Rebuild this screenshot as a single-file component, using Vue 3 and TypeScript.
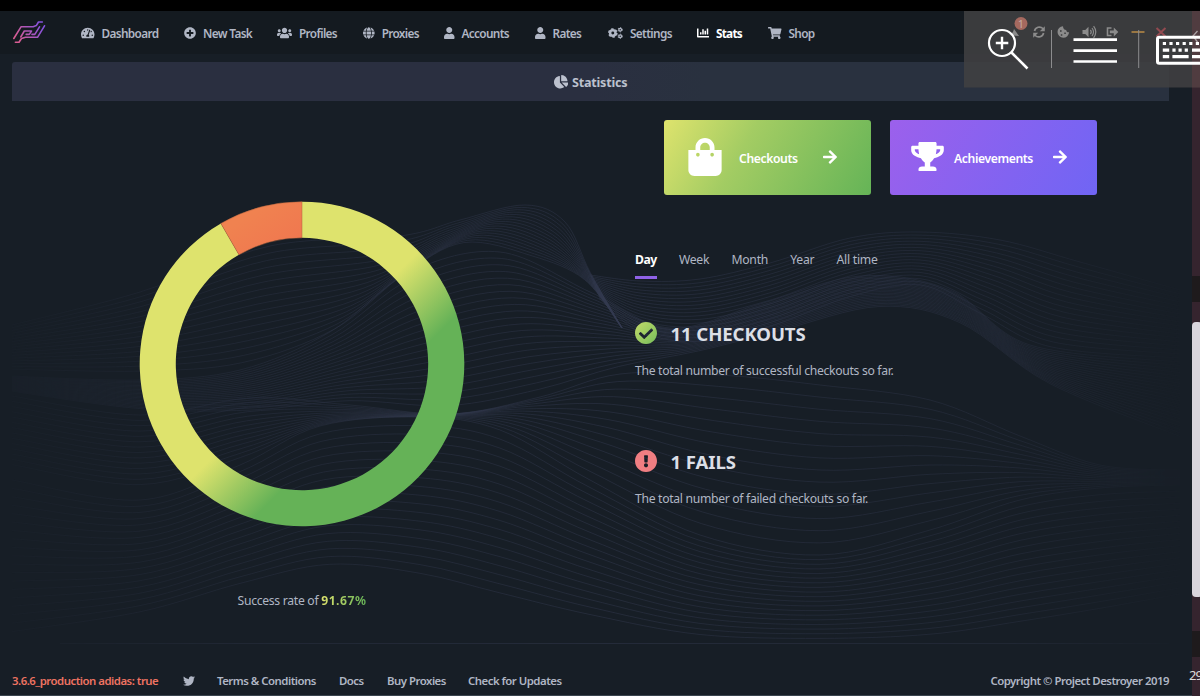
<script setup lang="ts">
interface Glyph { w: number; d: string }
type Pt = [number, number]

const glyphs: Record<string, Glyph> = {
  dashboard: { w: 576, d: 'M288 32C128.94 32 0 160.94 0 320c0 52.8 14.25 102.26 39.06 144.8 5.61 9.62 16.3 15.2 27.44 15.2h443c11.14 0 21.83-5.58 27.44-15.2C561.75 422.26 576 372.8 576 320c0-159.06-128.94-288-288-288zm0 64c14.71 0 26.58 10.13 30.32 23.65-1.11 2.26-2.64 4.23-3.45 6.67l-9.22 27.67c-5.13 3.49-10.97 6.01-17.64 6.01-17.67 0-32-14.33-32-32S270.33 96 288 96zM96 384c-17.67 0-32-14.33-32-32s14.33-32 32-32 32 14.33 32 32-14.33 32-32 32zm48-160c-17.67 0-32-14.33-32-32s14.33-32 32-32 32 14.33 32 32-14.33 32-32 32zm246.77-72.41l-61.33 184C343.13 347.33 352 364.54 352 384c0 11.72-3.38 22.55-8.88 32H232.88c-5.5-9.45-8.88-20.28-8.88-32 0-33.94 26.5-61.43 59.9-63.59l61.34-184.01c4.17-12.56 17.73-19.45 30.36-15.17 12.57 4.19 19.35 17.79 15.17 30.36zm14.66 57.2l15.52-46.55c3.47-1.29 7.13-2.23 11.05-2.23 17.67 0 32 14.33 32 32s-14.33 32-32 32c-11.38-.01-20.89-6.28-26.57-15.22zM480 384c-17.67 0-32-14.33-32-32s14.33-32 32-32 32 14.33 32 32-14.33 32-32 32z' },
  plus: { w: 512, d: 'M256 8C119 8 8 119 8 256s111 248 248 248 248-111 248-248S393 8 256 8zm144 276c0 6.6-5.4 12-12 12h-92v92c0 6.6-5.4 12-12 12h-56c-6.6 0-12-5.4-12-12v-92h-92c-6.6 0-12-5.4-12-12v-56c0-6.6 5.4-12 12-12h92v-92c0-6.6 5.4-12 12-12h56c6.6 0 12 5.4 12 12v92h92c6.6 0 12 5.4 12 12v56z' },
  users: { w: 640, d: 'M96 224c35.3 0 64-28.7 64-64s-28.7-64-64-64-64 28.7-64 64 28.7 64 64 64zm448 0c35.3 0 64-28.7 64-64s-28.7-64-64-64-64 28.7-64 64 28.7 64 64 64zm32 32h-64c-17.6 0-33.5 7.1-45.1 18.6 40.3 22.1 68.9 62 75.1 109.4h66c17.7 0 32-14.3 32-32v-32c0-35.3-28.7-64-64-64zm-256 0c61.9 0 112-50.1 112-112S381.9 32 320 32 208 82.1 208 144s50.1 112 112 112zm76.8 32h-8.3c-20.8 10-43.9 16-68.5 16s-47.6-6-68.5-16h-8.3C179.6 288 128 339.6 128 403.2V432c0 26.5 21.5 48 48 48h288c26.5 0 48-21.5 48-48v-28.8c0-63.6-51.6-115.2-115.2-115.2zm-223.7-13.4C161.5 263.1 145.6 256 128 256H64c-35.3 0-64 28.7-64 64v32c0 17.7 14.3 32 32 32h65.9c6.3-47.4 34.9-87.3 75.2-109.4z' },
  globe: { w: 496, d: 'M336.5 160C322 70.7 287.8 8 248 8s-74 62.7-88.5 152h177zM152 256c0 22.2 1.2 43.5 3.3 64h185.3c2.1-20.5 3.3-41.8 3.3-64s-1.2-43.5-3.3-64H155.3c-2.1 20.5-3.3 41.8-3.3 64zm324.7-96c-28.6-67.9-86.5-120.4-158-141.6 24.4 33.8 41.2 84.7 50 141.6h108zM177.2 18.4C105.8 39.6 47.8 92.1 19.3 160h108c8.7-56.9 25.5-107.8 49.9-141.6zM487.4 192H372.7c2.1 21 3.3 42.5 3.3 64s-1.2 43-3.3 64h114.6c5.5-20.5 8.6-41.8 8.6-64s-3.1-43.5-8.5-64zM120 256c0-21.5 1.2-43 3.3-64H8.6C3.2 212.5 0 233.8 0 256s3.2 43.5 8.6 64h114.6c-2-21-3.2-42.5-3.2-64zm39.5 96c14.5 89.3 48.7 152 88.5 152s74-62.7 88.5-152h-177zm159.3 141.6c71.4-21.2 129.4-73.7 158-141.6h-108c-8.8 56.9-25.6 107.8-50 141.6zM19.3 352c28.6 67.9 86.5 120.4 158 141.6-24.4-33.8-41.2-84.7-50-141.6h-108z' },
  user: { w: 448, d: 'M224 256c70.7 0 128-57.3 128-128S294.7 0 224 0 96 57.3 96 128s57.3 128 128 128zm89.6 32h-16.7c-22.2 10.2-46.9 16-72.9 16s-50.6-5.8-72.9-16h-16.7C60.2 288 0 348.2 0 422.4V464c0 26.5 21.5 48 48 48h352c26.5 0 48-21.5 48-48v-41.6c0-74.2-60.2-134.4-134.4-134.4z' },
  bars: { w: 512, d: 'M332.8 320h38.4c6.4 0 12.8-6.4 12.8-12.8V172.8c0-6.4-6.4-12.8-12.8-12.8h-38.4c-6.4 0-12.8 6.4-12.8 12.8v134.4c0 6.4 6.4 12.8 12.8 12.8zm96 0h38.4c6.4 0 12.8-6.4 12.8-12.8V76.8c0-6.4-6.4-12.8-12.8-12.8h-38.4c-6.4 0-12.8 6.4-12.8 12.8v230.4c0 6.4 6.4 12.8 12.8 12.8zm-288 0h38.4c6.4 0 12.8-6.4 12.8-12.8v-70.4c0-6.4-6.4-12.8-12.8-12.8h-38.4c-6.4 0-12.8 6.4-12.8 12.8v70.4c0 6.4 6.4 12.8 12.8 12.8zm96 0h38.4c6.4 0 12.8-6.4 12.8-12.8V108.8c0-6.4-6.4-12.8-12.8-12.8h-38.4c-6.4 0-12.8 6.4-12.8 12.8v198.4c0 6.4 6.4 12.8 12.8 12.8zM496 384H64V80c0-8.84-7.16-16-16-16H16C7.16 64 0 71.16 0 80v336c0 17.67 14.33 32 32 32h464c8.84 0 16-7.16 16-16v-32c0-8.84-7.16-16-16-16z' },
  cart: { w: 576, d: 'M528.12 301.319l47.273-208C578.806 78.301 567.391 64 551.99 64H159.208l-9.166-44.81C147.758 8.021 137.93 0 126.529 0H24C10.745 0 0 10.745 0 24v16c0 13.255 10.745 24 24 24h69.883l70.248 343.435C147.325 417.1 136 435.222 136 456c0 30.928 25.072 56 56 56s56-25.072 56-56c0-15.674-6.447-29.835-16.824-40h209.647C430.447 426.165 424 440.326 424 456c0 30.928 25.072 56 56 56s56-25.072 56-56c0-22.172-12.888-41.332-31.579-50.405l5.517-24.276c3.413-15.018-8.002-29.319-23.403-29.319H218.117l-6.545-32h293.145c11.206 0 20.92-7.754 23.403-18.681z' },
  pie: { w: 544, d: 'M527.79 288H290.5l158.03 158.03c6.04 6.04 15.98 6.53 22.19.68 38.7-36.46 65.32-85.61 73.13-140.86 1.34-9.46-6.51-17.85-16.06-17.85zm-15.83-64.8C503.72 103.74 408.26 8.28 288.8.04 279.68-.59 272 7.1 272 16.24V240h223.77c9.14 0 16.82-7.68 16.19-16.8zM224 288V50.71c0-9.55-8.39-17.4-17.84-16.06C86.99 51.49-4.1 155.6.14 280.37 4.5 408.51 114.83 513.59 243.03 511.98c50.4-.63 96.97-16.87 135.26-44.03 7.9-5.6 8.42-17.23 1.57-24.08L224 288z' },
  trophy: { w: 576, d: 'M552 64H448V24c0-13.3-10.7-24-24-24H152c-13.3 0-24 10.7-24 24v40H24C10.7 64 0 74.7 0 88v56c0 35.7 22.5 72.4 61.9 100.7 31.5 22.7 69.8 37.1 110 41.7C203.3 338.5 240 360 240 360v72h-48c-35.3 0-64 20.7-64 56v12c0 6.6 5.4 12 12 12h296c6.6 0 12-5.4 12-12v-12c0-35.3-28.7-56-64-56h-48v-72s36.7-21.5 68.1-73.6c40.3-4.6 78.6-19 110-41.7 39.3-28.3 61.9-65 61.9-100.7V88c0-13.3-10.7-24-24-24zM99.3 192.8C74.9 175.2 64 155.6 64 144v-16h64.2c1 32.6 5.8 61.2 12.8 86.2-15.1-5.2-29.2-12.4-41.7-21.4zM512 144c0 16.1-17.7 36.1-35.3 48.8-12.5 9-26.7 16.2-41.8 21.4 7-25 11.8-53.6 12.8-86.2H512v16z' },
  bag: { w: 448, d: 'M352 160v-32C352 57.42 294.579 0 224 0 153.42 0 96 57.42 96 128v32H0v272c0 44.183 35.817 80 80 80h288c44.183 0 80-35.817 80-80V160h-96zm-192-32c0-35.29 28.71-64 64-64s64 28.71 64 64v32H160v-32zm160 120c-13.255 0-24-10.745-24-24s10.745-24 24-24 24 10.745 24 24-10.745 24-24 24zm-192 0c-13.255 0-24-10.745-24-24s10.745-24 24-24 24 10.745 24 24-10.745 24-24 24z' },
  arrow: { w: 448, d: 'M190.5 66.9l22.2-22.2c9.4-9.4 24.6-9.4 33.9 0L441 239c9.4 9.4 9.4 24.6 0 33.9L246.6 467.3c-9.4 9.4-24.6 9.4-33.9 0l-22.2-22.2c-9.5-9.5-9.3-25 .4-34.3L311.4 296H24c-13.3 0-24-10.7-24-24v-32c0-13.3 10.7-24 24-24h287.4L190.9 101.2c-9.8-9.3-10-24.8-.4-34.3z' },
  check: { w: 512, d: 'M504 256c0 136.967-111.033 248-248 248S8 392.967 8 256 119.033 8 256 8s248 111.033 248 248zM227.314 387.314l184-184c6.248-6.248 6.248-16.379 0-22.627l-22.627-22.627c-6.248-6.249-16.379-6.249-22.628 0L216 308.118l-70.059-70.059c-6.248-6.248-16.379-6.248-22.628 0l-22.627 22.627c-6.248 6.248-6.248 16.379 0 22.627l104 104c6.249 6.249 16.379 6.249 22.628.001z' },
  alert: { w: 512, d: 'M504 256c0 136.997-111.043 248-248 248S8 392.997 8 256C8 119.083 119.043 8 256 8s248 111.083 248 248zm-248 50c-25.405 0-46 20.595-46 46s20.595 46 46 46 46-20.595 46-46-20.595-46-46-46zm-43.673-165.346l7.418 136c.347 6.364 5.609 11.346 11.982 11.346h48.546c6.373 0 11.635-4.982 11.982-11.346l7.418-136c.375-6.874-5.098-12.654-11.982-12.654h-63.383c-6.884 0-12.356 5.78-11.981 12.654z' },
  twitter: { w: 512, d: 'M459.37 151.716c.325 4.548.325 9.097.325 13.645 0 138.72-105.583 298.558-298.558 298.558-59.452 0-114.68-17.219-161.137-47.106 8.447.974 16.568 1.299 25.34 1.299 49.055 0 94.213-16.568 130.274-44.832-46.132-.975-84.792-31.188-98.112-72.772 6.498.974 12.995 1.624 19.818 1.624 9.421 0 18.843-1.3 27.614-3.573-48.081-9.747-84.143-51.98-84.143-102.985v-1.299c13.969 7.797 30.214 12.67 47.431 13.319-28.264-18.843-46.781-51.005-46.781-87.391 0-19.492 5.197-37.36 14.294-52.954 51.655 63.675 129.3 105.258 216.365 109.807-1.624-7.797-2.599-15.918-2.599-24.04 0-57.828 46.782-104.934 104.934-104.934 30.213 0 57.502 12.67 76.67 33.137 23.715-4.548 46.456-13.32 66.599-25.34-7.798 24.366-24.366 44.833-46.132 57.827 21.117-2.273 41.584-8.122 60.426-16.243-14.292 20.791-32.161 39.308-52.628 54.253z' },
}

const nav = [
  { label: 'Dashboard', icon: 'dashboard' },
  { label: 'New Task', icon: 'plus' },
  { label: 'Profiles', icon: 'users' },
  { label: 'Proxies', icon: 'globe' },
  { label: 'Accounts', icon: 'user' },
  { label: 'Rates', icon: 'user' },
  { label: 'Settings', icon: 'cogs' },
  { label: 'Stats', icon: 'bars' },
  { label: 'Shop', icon: 'cart' },
]

const ranges = ['Day', 'Week', 'Month', 'Year', 'All time']

/* Smooth path through a list of points (Catmull-Rom to Bezier). */
function smooth(p: Pt[]): string {
  let out = `M${p[0][0]} ${p[0][1].toFixed(1)}`
  for (let i = 0; i < p.length - 1; i++) {
    const a = p[Math.max(i - 1, 0)]
    const b = p[i]
    const c = p[i + 1]
    const d = p[Math.min(i + 2, p.length - 1)]
    out += `C${(b[0] + (c[0] - a[0]) / 6).toFixed(1)} ${(b[1] + (c[1] - a[1]) / 6).toFixed(1)} `
    out += `${(c[0] - (d[0] - b[0]) / 6).toFixed(1)} ${(c[1] - (d[1] - b[1]) / 6).toFixed(1)} ${c[0].toFixed(1)} ${c[1].toFixed(1)}`
  }
  return out
}

/* Lines blended between neighbouring key curves. */
function mesh(keys: Pt[][], steps: number): string[] {
  const lines: string[] = []
  for (let k = 0; k < keys.length - 1; k++) {
    for (let s = 0; s < steps; s++) {
      const t = s / steps
      lines.push(smooth(keys[k].map((p, i): Pt => [
        p[0] + (keys[k + 1][i][0] - p[0]) * t,
        p[1] + (keys[k + 1][i][1] - p[1]) * t,
      ])))
    }
  }
  return lines
}

const waves: string[] = [
  ...mesh([
    [[12, 325], [140, 292], [270, 246], [400, 236], [460, 220], [525, 205], [565, 222], [590, 272], [622, 328]],
    [[12, 372], [140, 376], [240, 370], [330, 335], [400, 278], [460, 245], [530, 258], [584, 280], [622, 328]],
  ], 17),
  ...mesh([
    [[590, 275], [640, 281], [700, 279], [770, 263], [850, 238], [920, 232], [1000, 240], [1080, 262], [1180, 290]],
    [[600, 300], [640, 335], [700, 345], [770, 330], [850, 300], [920, 288], [980, 318], [1050, 352], [1180, 362]],
  ], 18),
  ...mesh([
    [[12, 376], [140, 380], [240, 370], [330, 332], [410, 272], [500, 252], [590, 292], [670, 328], [760, 304], [860, 276], [950, 290], [1030, 345], [1180, 362]],
    [[12, 392], [140, 410], [250, 412], [350, 404], [450, 412], [540, 396], [620, 370], [700, 352], [780, 332], [880, 308], [960, 324], [1050, 385], [1180, 440]],
  ], 22),
  ...mesh([
    [[12, 396], [140, 415], [250, 398], [350, 405], [450, 414], [540, 397], [620, 374], [720, 375], [820, 385], [930, 400], [1020, 436], [1100, 465], [1180, 470]],
    [[12, 470], [140, 490], [240, 462], [320, 426], [420, 417], [500, 430], [590, 480], [700, 535], [820, 555], [930, 530], [1020, 500], [1100, 488], [1180, 485]],
  ], 14),
  ...mesh([
    [[12, 480], [140, 500], [240, 465], [320, 426], [420, 417], [500, 430], [590, 480], [700, 535], [820, 555], [930, 530], [1020, 500], [1100, 488], [1180, 485]],
    [[12, 640], [140, 618], [240, 590], [330, 572], [420, 582], [500, 602], [590, 622], [700, 640], [820, 643], [930, 640], [1020, 628], [1100, 615], [1180, 600]],
  ], 19),
  'M60 643.5H1169',
]
</script>

<template>
  <div class="screen">
    <div class="window">
      <header class="topbar">
        <svg class="logo" viewBox="0 0 36 26" fill="none">
          <defs>
            <linearGradient id="lg" gradientUnits="userSpaceOnUse" x1="2" y1="24" x2="33" y2="2">
              <stop offset="0.15" stop-color="#d75c92" />
              <stop offset="0.85" stop-color="#8652dd" />
            </linearGradient>
          </defs>
          <g stroke="url(#lg)" stroke-width="1.6" stroke-linejoin="round" stroke-linecap="round">
            <path d="M1.800 18.500 9 6.800H21.200L24.300 5.600 26.500 2h3.800" />
            <path d="M32.500 5.800 25.500 17.300H13.500L9.500 18.500 7 22.300H3.400" />
            <path d="M8.800 17 12.300 11H19.500l-2.200 3.400h-3.100M20 14.400h2.800L27.500 6.800" />
          </g>
        </svg>
        <nav class="nav">
          <a v-for="n in nav" :key="n.label" class="nav-item" :class="{ active: n.label === 'Stats' }">
            <svg v-if="n.icon === 'cogs'" class="nav-icon" viewBox="0 0 640 512" fill="none" stroke="currentColor">
              <circle cx="205" cy="256" r="115" stroke-width="105" />
              <circle cx="205" cy="256" r="172" stroke-width="68" stroke-dasharray="100 80.100" />
              <circle cx="520" cy="115" r="58" stroke-width="56" />
              <circle cx="520" cy="115" r="92" stroke-width="38" stroke-dasharray="50 46.300" />
              <circle cx="520" cy="397" r="58" stroke-width="56" />
              <circle cx="520" cy="397" r="92" stroke-width="38" stroke-dasharray="50 46.300" />
            </svg>
            <svg v-else class="nav-icon" :viewBox="`0 0 ${glyphs[n.icon].w} 512`" fill="currentColor"><path :d="glyphs[n.icon].d" /></svg>
            <span class="nav-label">{{ n.label }}</span>
          </a>
        </nav>
      </header>

      <h1 class="title">
        <svg class="title-icon" viewBox="0 0 544 512" fill="currentColor"><path :d="glyphs.pie.d" /></svg>
        <span>Statistics</span>
      </h1>

      <main class="main">
        <svg class="waves" viewBox="0 101 1192 555" fill="none">
          <defs>
            <linearGradient id="fade" x1="0" x2="1" y1="0" y2="0">
              <stop offset="0" stop-color="#fff" stop-opacity="0.1" />
              <stop offset="0.2" stop-color="#fff" stop-opacity="0.7" />
              <stop offset="0.5" stop-color="#fff" />
              <stop offset="0.85" stop-color="#fff" stop-opacity="0.7" />
              <stop offset="0.98" stop-color="#fff" stop-opacity="0.1" />
            </linearGradient>
            <mask id="edge" maskUnits="userSpaceOnUse" x="0" y="101" width="1192" height="555">
              <rect x="0" y="101" width="1192" height="555" fill="url(#fade)" />
            </mask>
          </defs>
          <g mask="url(#edge)" stroke="#363c52" stroke-opacity="0.45" stroke-width="1">
            <path v-for="(d, i) in waves" :key="i" :d="d" />
          </g>
        </svg>

        <section class="rate">
          <svg class="donut" viewBox="139 201 326 326">
            <defs>
              <linearGradient id="good" gradientUnits="userSpaceOnUse" x1="304" y1="366" x2="355" y2="417">
                <stop offset="0" stop-color="#dee36d" />
                <stop offset="1" stop-color="#65b257" />
              </linearGradient>
              <linearGradient id="bad" x1="0" y1="0" x2="1" y2="1">
                <stop offset="0.3" stop-color="#f08250" />
                <stop offset="1" stop-color="#f0744f" />
              </linearGradient>
            </defs>
            <path fill="url(#good)" d="M302 201.7A162.3 162.3 0 1 1 220.85 223.45L238.9 254.7A126.2 126.2 0 1 0 302 237.8Z" />
            <path fill="url(#bad)" stroke="#b3643f" stroke-width=".5" d="M220.85 223.45A162.3 162.3 0 0 1 302 201.7V237.8A126.2 126.2 0 0 0 238.9 254.7Z" />
          </svg>
          <p class="rate-text">Success rate of <b>91.67%</b></p>
        </section>

        <section class="details">
          <div class="cards">
            <a class="card green">
              <svg class="card-icon bag" viewBox="0 0 448 512" fill="#fff"><path :d="glyphs.bag.d" /></svg>
              <span class="card-label">Checkouts</span>
              <svg class="card-arrow" viewBox="0 0 448 512" fill="#fff"><path :d="glyphs.arrow.d" /></svg>
            </a>
            <a class="card purple">
              <svg class="card-icon cup" viewBox="0 0 576 512" fill="#fff"><path :d="glyphs.trophy.d" /></svg>
              <span class="card-label">Achievements</span>
              <svg class="card-arrow" viewBox="0 0 448 512" fill="#fff"><path :d="glyphs.arrow.d" /></svg>
            </a>
          </div>

          <div class="tabs">
            <span v-for="(r, i) in ranges" :key="r" class="tab" :class="{ on: i === 0 }">{{ r }}</span>
          </div>

          <article class="stat">
            <h2>
              <svg class="stat-icon" viewBox="8 8 496 496">
                <defs>
                  <linearGradient id="ok" x1="0" y1="0" x2="1" y2="1">
                    <stop offset="0" stop-color="#c3da69" /><stop offset="1" stop-color="#76bd5b" />
                  </linearGradient>
                </defs>
                <path fill="url(#ok)" :d="glyphs.check.d" />
              </svg>
              <span>11 CHECKOUTS</span>
            </h2>
            <p>The total number of successful checkouts so far.</p>
          </article>
          <article class="stat">
            <h2>
              <svg class="stat-icon" viewBox="8 8 496 496"><path fill="#f07e82" :d="glyphs.alert.d" /></svg>
              <span>1 FAILS</span>
            </h2>
            <p>The total number of failed checkouts so far.</p>
          </article>
        </section>
      </main>

      <footer class="footer">
        <span class="version">3.6.6_production adidas: true</span>
        <svg class="bird" viewBox="0 0 512 512" fill="currentColor"><path :d="glyphs.twitter.d" /></svg>
        <a class="terms">Terms &amp; Conditions</a>
        <a class="docs">Docs</a>
        <a class="buy">Buy Proxies</a>
        <a class="upd">Check for Updates</a>
        <span class="copy">Copyright © Project Destroyer 2019</span>
      </footer>
    </div>

    <aside class="behind">
      <i class="dark one"></i>
      <i class="thumb"></i>
      <i class="dark two"></i>
      <span class="clock">29</span>
    </aside>

    <svg class="overlay" viewBox="964 11 236 77" fill="none">
      <rect x="964" y="11" width="236" height="76.5" fill="#404042" fill-opacity="0.87" />
      <rect x="1192" y="11" width="8" height="76.5" fill="#6b3b43" fill-opacity="0.4" />
      <g stroke="#8b8b8b" stroke-width="1.7">
        <path d="M1009 35q4-1 5-6l5 7z" fill="#8b8b8b" stroke="none" />
        <path d="M1034.5 31a5 5 0 0 1 8.4-2.5l1 1M1043.6 33a5 5 0 0 1-8.4 2.5l-1-1" />
        <path d="M1044.8 26.3v5h-5zM1033.2 37.7v-5h5z" fill="#8b8b8b" stroke="none" />
        <path fill-rule="evenodd" d="M1063 26.2a5.8 5.8 0 1 0 6.1 6.1c-1.7.1-2.8-.8-2.9-2.3-2 0-3.1-1.5-3.2-3.8zM1060 30.2h1.6v1.6h-1.6zM1060.8 34.2h1.5v1.5h-1.5zM1064.3 32.6h1.5v1.5h-1.5z" fill="#8b8b8b" stroke="none" />
        <path d="M1082.5 30h2.8l3.2-3.2v10.4l-3.2-3.2h-2.8z" fill="#8b8b8b" stroke="none" />
        <path d="M1090.4 29.8q1.7 2.2 0 4.4M1092 28q3 4 0 8M1093.6 26.2q4.4 5.8 0 11.6" stroke-width="1.2" />
        <path d="M1111.5 28h-4v7.5h4" stroke-width="1.6" />
        <path d="M1109.8 30.6h4v-3.2l4.5 4.5-4.5 4.5v-3.2h-4z" fill="#8b8b8b" stroke="none" />
      </g>
      <circle cx="1021" cy="23.5" r="6.5" fill="#a5695f" />
      <text x="1021" y="27.5" class="badge">1</text>
      <path d="M1131.5 32h13" stroke="#9a7743" stroke-width="2" />
      <path d="m1156.500 28 9 8.500m0-8.500-9 8.500" stroke="#924a50" stroke-width="2" />
      <g>
        <path d="M1051.5 30v38M1138.700 30v38" stroke="#8c8c8e" stroke-width="1" />
        <circle cx="1002" cy="43" r="13" stroke="#fff" stroke-width="2.2" />
        <path d="M1002 36.700v12.500M995.800 43h12.500" stroke="#fff" stroke-width="2.4" />
        <path d="m1011.500 52.500 16 16" stroke="#fff" stroke-width="2.6" />
        <path d="M1073.500 39.700h43.500M1073.500 50.600h43.500M1073.500 61.500h43.500" stroke="#fff" stroke-width="2.7" />
        <path d="m1197.500 31-4.500 5 4.500 6" stroke="#a9a1a3" stroke-width="1.3" />
        <rect x="1157.500" y="37.200" width="52" height="26" rx="1.8" stroke="#fff" stroke-width="3" />
        <path d="M1162.800 43.500h40" stroke="#fff" stroke-width="3.2" stroke-dasharray="3.200 3.400" />
        <path d="M1162.800 50.200h6.400M1172.400 50.200h3.200M1178.500 50.200h3.200M1184.700 50.200h3.200M1192 50.200h8M1162.800 56.700h6.400M1172.400 56.700h16.200M1192 56.700h8" stroke="#fff" stroke-width="3.2" />
      </g>
    </svg>
  </div>
</template>

<style>
html, body { background: #000; overflow: hidden; }
</style>

<style scoped>
.screen {
  position: relative;
  box-sizing: border-box;
  display: flex;
  width: 1200px;
  height: 696px;
  padding-top: 11px;
  overflow: hidden;
  background: #000;
  color: #b0b6c4;
  font-family: "Noto Sans", "Open Sans", sans-serif;
  font-size: 12.2px;
}
.window {
  display: flex;
  flex-direction: column;
  width: 1192px;
  height: 684px;
  background: #171e26;
  border-bottom: 1px solid #3a444e;
}
.topbar { display: flex; align-items: center; height: 43px; background: #141a20; }
.logo { width: 36px; height: 26px; margin-left: 12px; }
.nav { display: grid; grid-template-columns: 103px 93px 86px 81px 91px 73px 89px 71px 60px; margin-left: 33px; }
.nav-item { display: flex; align-items: center; gap: 7px; height: 20px; font-weight: 500; white-space: nowrap; }
.nav-icon { flex: none; height: 12px; }
.nav-label { font-size: 11.8px; font-weight: 600; letter-spacing: -0.65px; }
.active { color: #fff; }
.active .nav-label { font-weight: 700; letter-spacing: -0.75px; }
.title {
  display: flex;
  align-items: center;
  justify-content: center;
  gap: 4px;
  box-sizing: border-box;
  width: 1157px;
  height: 39px;
  margin: 8px 0 0 12px;
  padding-top: 1px;
  border-radius: 3px 3px 0 0;
  background: linear-gradient(90deg, #2a2f40 50%, #29313f 60%);
  font-size: 12.6px;
  font-weight: 700;
  letter-spacing: -0.2px;
  color: #bcc1ce;
}
.title-icon { height: 13.5px; }
.main { position: relative; display: flex; height: 555px; }
.waves { position: absolute; inset: 0; width: 1192px; height: 555px; }
.rate { position: relative; display: flex; flex-direction: column; align-items: center; width: 604px; padding-top: 100px; }
.donut { width: 326px; height: 326px; }
.rate-text { margin: 65px 0 0; line-height: 17px; letter-spacing: -0.3px; }
.rate-text b { background: linear-gradient(90deg, #dee36d, #65b257); background-clip: text; color: transparent; letter-spacing: 0.5px; }
.details { position: relative; padding: 18.5px 0 0 31px; }
.cards { display: flex; gap: 19px; padding-left: 29px; }
.card { display: flex; align-items: center; box-sizing: border-box; width: 207px; height: 75px; border-radius: 3px; color: #fff; font-weight: 700; }
.green { background: linear-gradient(120deg, #dee36d, #a3cc63 38%, #65b457); padding-left: 24px; }
.purple { background: linear-gradient(120deg, #9c60ec, #7065f4); padding-left: 21px; }
.bag { width: 34px; height: 38px; }
.cup { width: 33px; height: 29px; margin-top: -2px; }
.card-label { width: 84px; margin-left: 17px; padding-top: 2px; font-weight: 600; letter-spacing: -0.4px; }
.purple .card-label { width: 94px; margin-left: 10px; }
.card-arrow { width: 14px; height: 16px; margin-top: -1px; }
.purple .card-arrow { margin-left: 5px; }
.tabs { display: flex; gap: 22.2px; margin-top: 55px; line-height: 19px; letter-spacing: -0.25px; }
.tab { height: 26px; border-bottom: 3px solid transparent; }
.on { border-color: #8f62e6; color: #fff; font-weight: 700; letter-spacing: -0.5px; }
.stat { height: 128px; }
.tabs + .stat { margin-top: 40px; }
.stat h2 { display: flex; align-items: center; gap: 13.5px; height: 28px; margin: 0; color: #dcdfe6; font-size: 18.6px; font-weight: 700; letter-spacing: -0.1px; }
.stat h2 span { padding-top: 1px; }
.stat-icon { width: 22px; height: 22px; }
.stat p { margin: 15px 0 0; line-height: 18px; letter-spacing: -0.32px; white-space: nowrap; }
.footer { display: flex; align-items: center; height: 29px; margin-top: 10px; padding: 0 23px 0 12px; font-size: 11.4px; font-weight: 600; white-space: nowrap; letter-spacing: -0.5px; }
.version { width: 171px; color: #ee7362; }
.bird { width: 12px; height: 12px; margin-right: 22px; }
.terms { width: 122px; }
.docs { width: 48px; }
.buy { width: 81px; }
.copy { margin-left: auto; }
.behind { display: flex; flex-direction: column; width: 8px; height: 685px; background: #35242e; }
.dark { height: 26px; background: #1e1a1c; }
.one { margin-top: 265px; }
.two { margin-top: 34px; }
.thumb { width: 10px; height: 275px; margin-top: 20px; border-radius: 4px; background: #d9d5dc; }
.clock { margin: 9px 0 0 -3px; color: #ddd; font-size: 13px; line-height: 18px; letter-spacing: -1px; }
.overlay { position: absolute; top: 11px; left: 964px; width: 236px; height: 77px; }
.badge { fill: #c3aaa5; font-size: 11px; text-anchor: middle; }
</style>
